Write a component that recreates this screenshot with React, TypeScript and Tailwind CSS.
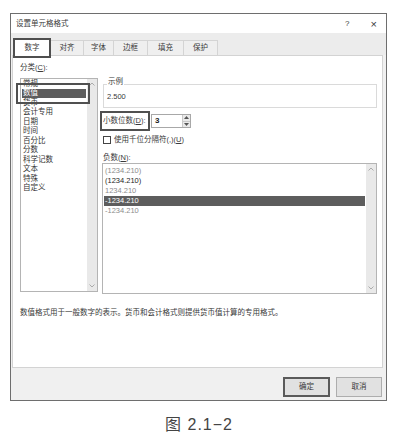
const categories = ['常规', '数值', '货币', '会计专用', '日期', '时间', '百分比', '分数', '科学记数', '文本', '特殊', '自定义']

const negatives = [
  { text: '(1234.210)', cls: 'text-[#8c8c8c]' },
  { text: '(1234.210)', cls: 'text-[#1e1e1e]' },
  { text: '1234.210', cls: 'text-[#8c8c8c]' },
  { text: '-1234.210', cls: 'bg-[#5d5d5d] text-white' },
  { text: '-1234.210', cls: 'text-[#8c8c8c]' },
]

const tabs = [
  { label: '对齐', w: 'w-[33px]' },
  { label: '字体', w: 'w-[30px]' },
  { label: '边框', w: 'w-[34px]' },
  { label: '填充', w: 'w-[36px]' },
  { label: '保护', w: 'w-[34px]' },
]

export default function App() {
  return (
    <div className="h-[445px] w-[398px] bg-white pt-[13px] font-['Liberation_Sans','Noto_Sans_CJK_SC',sans-serif] text-[7.5px] leading-[10px] text-[#3a3a3a]">
      <div className="ml-[10px] flex h-[388px] w-[377px] flex-col border border-[#6e6e6e] bg-[#f0f0f0]">
        {/* ── Title bar ── */}
        <div className="flex h-[19px] items-center bg-white pl-[5px]">
          <span>设置单元格格式</span>
          <span className="ml-auto text-[8px]">?</span>
          <span className="ml-[21px] mr-[9px] text-[11px] font-light">×</span>
        </div>

        {/* ── Tabs ── */}
        <div className="flex h-[22px] items-end bg-[#ececec] pl-[2px]">
          <div className="relative z-10 -mb-[3px] flex h-[20px] w-[38px] items-center justify-center border-2 border-[#4f4f4f] bg-white">
            数字
          </div>
          {tabs.map((t) => (
            <div
              key={t.label}
              className={`flex h-[15px] ${t.w} items-center justify-center border-r border-t border-[#d4d4d4] bg-[#efefef]`}
            >
              {t.label}
            </div>
          ))}
        </div>

        {/* ── Panel ── */}
        <div className="ml-[1px] h-[313px] w-[371px] border border-[#d3d3d3] bg-white pl-[7px] pt-[7px]">
          <div className="flex items-start">
            {/* category list */}
            <div className="w-[78px]">
              <div>
                分类(<u>C</u>):
              </div>
              <div className="relative mt-[5px] flex h-[214px] border border-[#b4b4b4]">
                <div className="flex-1 px-[1px]">
                  {categories.map((c, i) => (
                    <div
                      key={c}
                      className={`flex h-[9.5px] items-center pl-[1px] ${i === 1 ? 'bg-[#5d5d5d] text-white' : 'text-[#333]'}`}
                    >
                      {c}
                    </div>
                  ))}
                </div>
                <ScrollBar />
                <div className="absolute -left-[5px] top-[4px] h-[21px] w-[74px] border-2 border-[#505050]" />
              </div>
            </div>

            {/* right column */}
            <div className="ml-[2px] w-[277px]">
              <div className="relative ml-[3px] mt-[21px] h-[24px] w-[274px] border border-[#dadada] pl-[3px] pt-[7px]">
                <span className="absolute -top-[8px] left-[3px] bg-white px-[1px]">示例</span>
                2.500
              </div>

              <div className="mt-[3px] flex items-center">
                <div className="flex h-[20px] w-[50px] items-center border-2 border-[#505050] pl-[1px]">
                  小数位数(<u>D</u>):
                </div>
                <div className="ml-[1px] flex h-[14px] w-[40px] border border-[#a8a8a8]">
                  <div className="flex flex-1 items-center pl-[3px] text-[8px] font-bold text-[#222]">3</div>
                  <div className="flex w-[8px] flex-col border-l border-[#c8c8c8]">
                    <div className="flex flex-1 items-center justify-center border-b border-[#c8c8c8] bg-[#e9e9e9]">
                      <svg width="5" height="3" viewBox="0 0 5 3"><path d="M0 3 L2.5 0 L5 3 Z" fill="#555" /></svg>
                    </div>
                    <div className="flex flex-1 items-center justify-center bg-[#e9e9e9]">
                      <svg width="5" height="3" viewBox="0 0 5 3"><path d="M0 0 L2.5 3 L5 0 Z" fill="#555" /></svg>
                    </div>
                  </div>
                </div>
              </div>

              <div className="ml-[3px] mt-[4px] flex h-[10px] items-center">
                <div className="h-[8px] w-[8px] border border-[#444] bg-white" />
                <span className="ml-[3px]">
                  使用千位分隔符(,)(<u>U</u>)
                </span>
              </div>

              <div className="ml-[3px] mt-[8px]">
                负数(<u>N</u>):
              </div>

              <div className="ml-[2px] flex h-[131px] w-[275px] border border-[#b4b4b4]">
                <div className="flex-1 px-[1px] pt-[2px]">
                  {negatives.map((n, i) => (
                    <div key={i} className={`flex h-[10px] items-center pl-[1px] ${n.cls}`}>
                      {n.text}
                    </div>
                  ))}
                </div>
                <ScrollBar />
              </div>
            </div>
          </div>

          <p className="mt-[14px]">数值格式用于一般数字的表示。货币和会计格式则提供货币值计算的专用格式。</p>
        </div>

        {/* ── Buttons ── */}
        <div className="flex flex-1 items-start justify-end gap-[6px] pr-[4px] pt-[9px]">
          <button className="flex h-[20px] w-[47px] items-center justify-center border-2 border-[#5a5a5a] bg-[#e1e1e1]">
            确定
          </button>
          <button className="flex h-[20px] w-[46px] items-center justify-center border border-[#adadad] bg-[#e1e1e1]">
            取消
          </button>
        </div>
      </div>

      <div className="mt-[14px] text-center text-[16px] leading-[20px] tracking-[1px] text-[#444]">图 2.1−2</div>
    </div>
  )
}

function ScrollBar() {
  return (
    <div className="flex w-[10px] flex-col items-center justify-between bg-[#e9e9e9] py-[3px]">
      <svg width="6" height="4" viewBox="0 0 6 4"><path d="M0.5 3.5 L3 1 L5.5 3.5" fill="none" stroke="#9a9a9a" strokeWidth="0.8" /></svg>
      <svg width="6" height="4" viewBox="0 0 6 4"><path d="M0.5 0.5 L3 3 L5.5 0.5" fill="none" stroke="#9a9a9a" strokeWidth="0.8" /></svg>
    </div>
  )
}
